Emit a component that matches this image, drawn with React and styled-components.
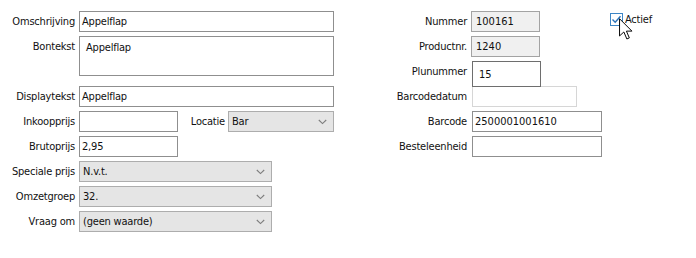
import React from "react";
import styled, { createGlobalStyle } from "styled-components";

const Global = createGlobalStyle`
  html, body { margin: 0; padding: 0; background: #ffffff; }
  body {
    font-family: "DejaVu Sans Condensed", Tahoma, "DejaVu Sans", sans-serif;
    font-size: 11px;
    letter-spacing: -0.2px;
    color: #111;
  }
  * { box-sizing: border-box; }
`;

const Page = styled.div`
  display: flex;
  align-items: flex-start;
  padding-top: 11px;
  width: 696px;
  height: 258px;
`;

const LeftForm = styled.div`
  display: grid;
  grid-template-columns: 75px 255px;
  grid-template-rows: 21px 46px 21px 21px 21px 21px 21px 21px;
  column-gap: 4px;
  row-gap: 4px;
`;

const RightForm = styled.div`
  display: grid;
  grid-template-columns: 87px 131px;
  grid-auto-rows: 21px;
  column-gap: 4px;
  row-gap: 4px;
  margin-left: 46px;
`;

const Label = styled.div`
  display: flex;
  justify-content: flex-end;
  align-items: ${(p) => (p.$top ? "flex-start" : "center")};
  padding-top: ${(p) => (p.$top ? "4px" : "0")};
  white-space: nowrap;
`;

const Input = styled.div`
  width: ${(p) => p.$w}px;
  height: ${(p) => p.$h || 21}px;
  margin-left: ${(p) => p.$ml || 0}px;
  border: 1px solid ${(p) =>
    p.$variant === "disabled" ? "#d6d6d6" : p.$variant === "readonly" ? "#a3a3a3" : p.$variant === "focus" ? "#6e6e6e" : "#8f8f8f"};
  background: ${(p) => (p.$variant === "readonly" ? "#f0f0f0" : "#ffffff")};
  display: flex;
  align-items: ${(p) => (p.$multi ? "flex-start" : "center")};
  padding: ${(p) => (p.$multi ? "4px 0 0 6px" : `0 0 0 ${p.$pl || 2}px`)};
  letter-spacing: ${(p) => (p.$digits ? "0" : "inherit")};
  white-space: nowrap;
  align-self: start;
  position: ${(p) => (p.$raised ? "relative" : "static")};
  z-index: ${(p) => (p.$raised ? 1 : "auto")};
`;

const FieldRow = styled.div`
  display: flex;
  align-items: center;
`;

const InlineLabel = styled.span`
  margin-left: auto;
  margin-right: 3px;
`;

const Combo = styled.div`
  width: ${(p) => p.$w}px;
  height: 21px;
  border: 1px solid #adadad;
  background: #e5e5e5;
  display: flex;
  align-items: center;
  padding: 0 6px 0 3px;
  white-space: nowrap;
`;

const ComboText = styled.span`
  flex: 1;
`;

const Chevron = () => (
  <svg width="9" height="6" viewBox="0 0 9 6">
    <path d="M0.8 1 L4.5 4.6 L8.2 1" fill="none" stroke="#7d7d7d" strokeWidth="1.1" />
  </svg>
);

const CheckWrap = styled.div`
  position: relative;
  display: flex;
  align-items: center;
  gap: 2px;
  margin-left: 8px;
  margin-top: 2px;
`;

const CheckText = styled.span`
  line-height: 13px;
`;

const Cursor = styled.svg`
  position: absolute;
  left: 9px;
  top: 5px;
`;

export default function App() {
  return (
    <>
      <Global />
      <Page>
        <LeftForm>
          <Label>Omschrijving</Label>
          <Input $w={255}>Appelflap</Input>

          <Label $top>Bontekst</Label>
          <Input $w={255} $h={40} $multi>Appelflap</Input>

          <Label>Displaytekst</Label>
          <Input $w={255}>Appelflap</Input>

          <Label>Inkoopprijs</Label>
          <FieldRow>
            <Input $w={99} />
            <InlineLabel>Locatie</InlineLabel>
            <Combo $w={106}>
              <ComboText>Bar</ComboText>
              <Chevron />
            </Combo>
          </FieldRow>

          <Label>Brutoprijs</Label>
          <Input $w={99}>2,95</Input>

          <Label>Speciale prijs</Label>
          <Combo $w={193}>
            <ComboText>N.v.t.</ComboText>
            <Chevron />
          </Combo>

          <Label>Omzetgroep</Label>
          <Combo $w={193}>
            <ComboText>32.</ComboText>
            <Chevron />
          </Combo>

          <Label>Vraag om</Label>
          <Combo $w={193}>
            <ComboText>(geen waarde)</ComboText>
            <Chevron />
          </Combo>
        </LeftForm>

        <RightForm>
          <Label>Nummer</Label>
          <Input $w={69} $variant="readonly" $pl={4} $digits>100161</Input>

          <Label>Productnr.</Label>
          <Input $w={69} $variant="readonly" $pl={4} $digits>1240</Input>

          <Label>Plunummer</Label>
          <Input $w={69} $h={26} $ml={1} $variant="focus" $pl={6} $raised $digits>15</Input>

          <Label>Barcodedatum</Label>
          <Input $w={105} $ml={1} $variant="disabled" />

          <Label>Barcode</Label>
          <Input $w={130} $ml={1} $pl={2} $digits>2500001001610</Input>

          <Label>Besteleenheid</Label>
          <Input $w={130} $ml={1} />
        </RightForm>

        <CheckWrap>
          <svg width="13" height="13" viewBox="0 0 13 13">
            <rect x="0.5" y="0.5" width="12" height="12" fill="#fff" stroke="#3d86c6" />
            <path d="M2.5 6.5 L5.2 9.2 L10.5 3.3" fill="none" stroke="#2b72b8" strokeWidth="1.4" />
          </svg>
          <CheckText>Actief</CheckText>
          <Cursor width="14" height="23" viewBox="0 0 13 21">
            <path
              d="M0.5 0.5 L0.5 16.5 L4.5 12.8 L7.3 19.3 L9.6 18.3 L6.9 12 L12 12 Z"
              fill="#ffffff"
              stroke="#000"
              strokeWidth="0.9"
              strokeLinejoin="round"
            />
          </Cursor>
        </CheckWrap>
      </Page>
    </>
  );
}
